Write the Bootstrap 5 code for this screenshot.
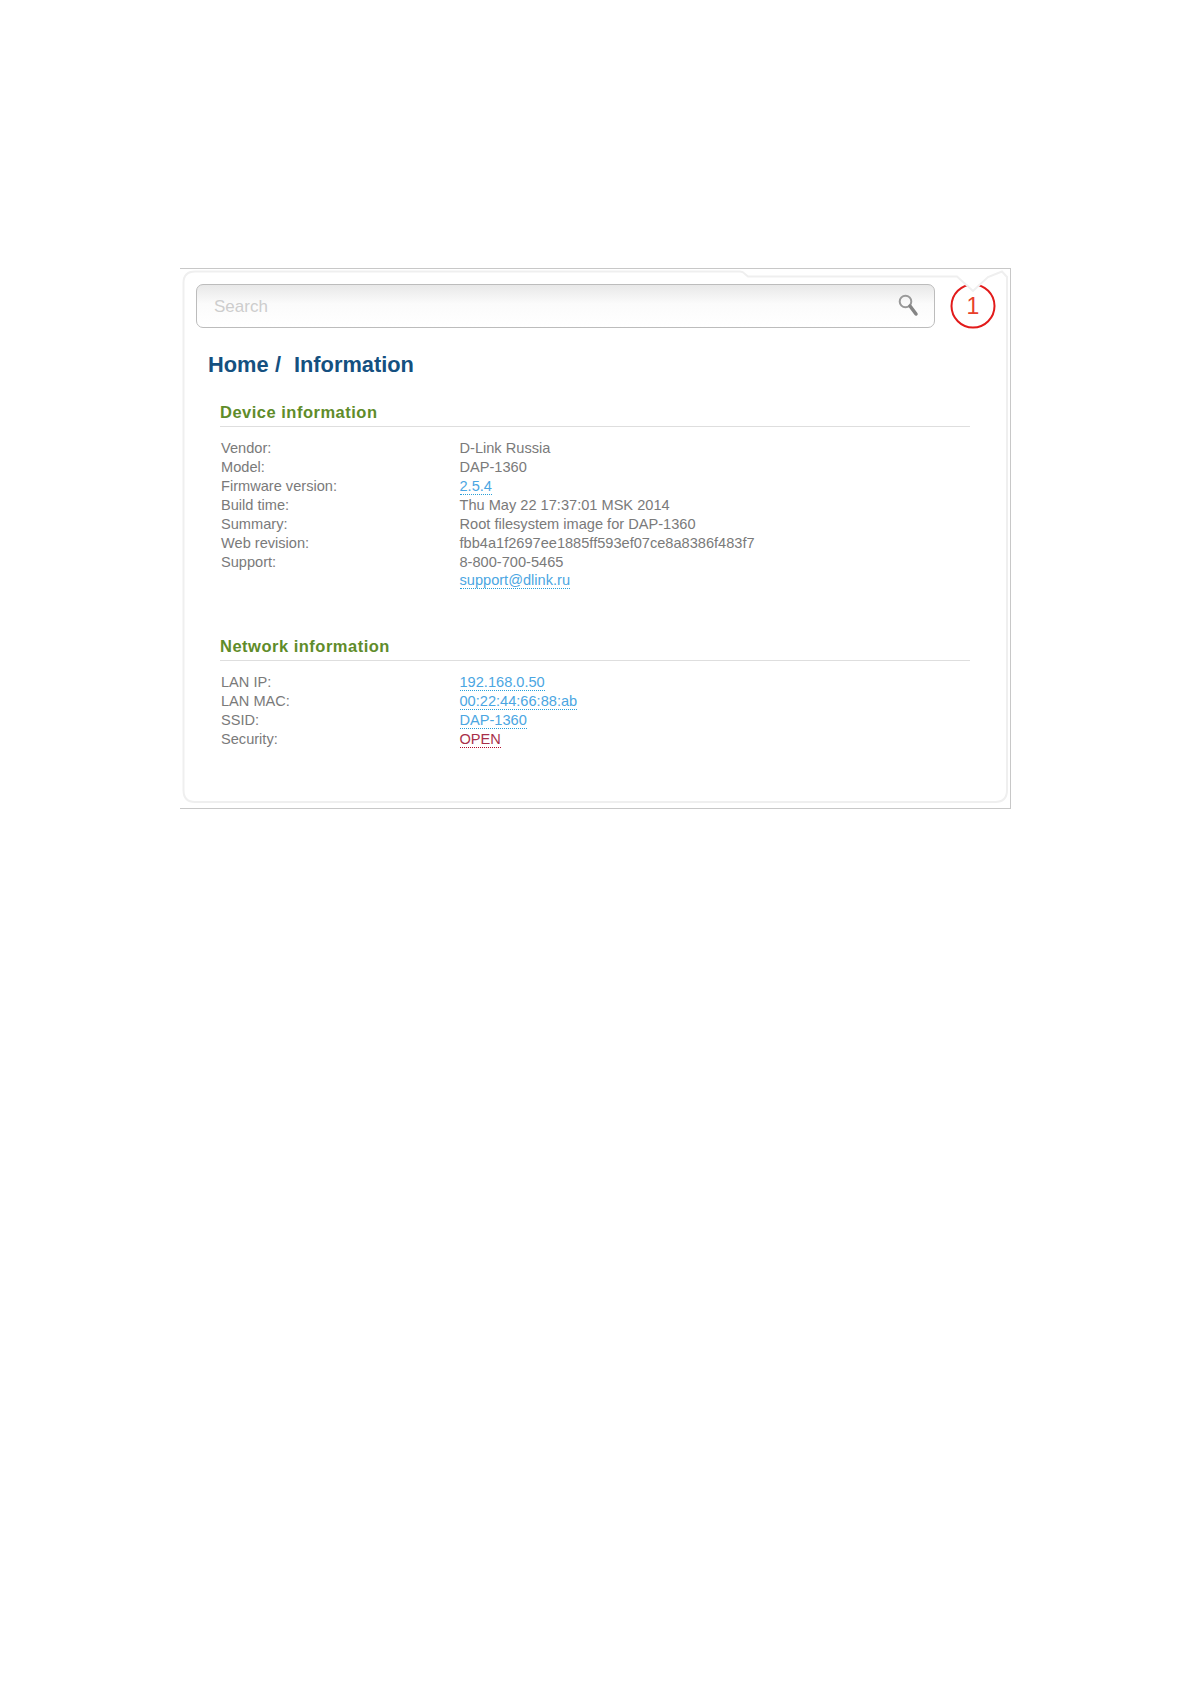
<!DOCTYPE html>
<html lang="en">
<head>
<meta charset="utf-8">
<title>Information</title>
<link href="https://cdn.jsdelivr.net/npm/bootstrap@5.3.0/dist/css/bootstrap.min.css" rel="stylesheet">
<style>
body{background:#fff;font-family:"Liberation Sans",Arial,sans-serif;color:#7a7a7a}
.shot-frame{position:relative;margin:268px 0 0 180px;width:831px;height:541px;border:1px solid #c8c8c8;border-left:0;background:#fff}
.shot-deco{position:absolute;left:0;top:-1px;width:831px;height:541px;pointer-events:none}
.shot-inner{position:relative;padding:15px 0 0 16px}
.shot-search{position:relative;width:739px;height:44px}
.shot-search .form-control{height:44px;border:1px solid #bcbcbc;border-radius:7px;padding:2px 17px 0;font-size:17px;color:#777;background:linear-gradient(#e8e8e8,#fbfbfb 45%,#fff);box-shadow:none}
.shot-search .form-control::placeholder{color:#cdcdcd;opacity:1}
.shot-glass{position:absolute;left:700px;top:8px;width:24px;height:28px}
.shot-mark{position:absolute;left:782px;top:23px;width:22px;text-align:center;font-size:23px;line-height:28px;color:#e8402a}
.shot-title{margin:22px 0 16px 12px;font-size:21.8px;line-height:30px;font-weight:700;color:#145080;white-space:pre;word-spacing:.4px}
.shot-section{width:750px;margin-left:24px}
.shot-section+.shot-section{margin-top:40px}
.shot-head{height:31px;margin:0 0 12px;padding-top:5px;border-bottom:1px solid #dedede;font-size:16.5px;letter-spacing:.5px;line-height:22px;font-weight:700;color:#5f8c2a}
.shot-row{padding-left:1px;font-size:14.6px;line-height:19px;color:#7a7a7a}
.shot-row.shot-tight{margin-top:-1px}
.shot-key{width:238.5px;flex:none}
.shot-link{color:#4ba6e2;text-decoration:none;border-bottom:1px dotted #2a9fd8}
.shot-bad{color:#a8304a;border-bottom-color:#b0102c}
</style>
</head>
<body>
<main class="shot-frame">
  <svg class="shot-deco" viewBox="0 0 831 541" aria-hidden="true">
    <circle cx="793" cy="38" r="21.5" fill="none" stroke="#e21a1a" stroke-width="2"></circle>
    <path d="M775 4 L793 23 L811 4 Z" fill="#fff"></path>
    <path d="M15 3.5 H560 Q563 3.5 565 6 L568 8.5 H777 L793 23 L808 9 L822 3.5 L827 9 V522 Q827 534 815 534 H15 Q3.5 534 3.5 522 V15 Q3.5 3.5 15 3.5 Z" fill="none" stroke="#efefef" stroke-width="2"></path>
  </svg>
  <div class="shot-inner">
    <div class="shot-search">
      <input class="form-control" type="text" placeholder="Search">
      <svg class="shot-glass" viewBox="0 0 24 28" aria-hidden="true">
        <circle cx="9.500" cy="9.500" r="5.800" fill="none" stroke="#999" stroke-width="2"></circle>
        <path d="M14 14 L20 22" stroke="#858585" stroke-width="3.500" stroke-linecap="round"></path>
      </svg>
    </div>
    <div class="shot-mark">1</div>
    <h1 class="shot-title">Home /  Information</h1>
    <section class="shot-section">
      <h2 class="shot-head">Device information</h2>
      <div class="shot-row d-flex"><div class="shot-key">Vendor:</div><div>D-Link Russia</div></div>
      <div class="shot-row d-flex"><div class="shot-key">Model:</div><div>DAP-1360</div></div>
      <div class="shot-row d-flex"><div class="shot-key">Firmware version:</div><div><a class="shot-link" href="#">2.5.4</a></div></div>
      <div class="shot-row d-flex"><div class="shot-key">Build time:</div><div>Thu May 22 17:37:01 MSK 2014</div></div>
      <div class="shot-row d-flex"><div class="shot-key">Summary:</div><div>Root filesystem image for DAP-1360</div></div>
      <div class="shot-row d-flex"><div class="shot-key">Web revision:</div><div>fbb4a1f2697ee1885ff593ef07ce8a8386f483f7</div></div>
      <div class="shot-row d-flex"><div class="shot-key">Support:</div><div>8-800-700-5465</div></div>
      <div class="shot-row shot-tight d-flex"><div class="shot-key"></div><div><a class="shot-link" href="#">support@dlink.ru</a></div></div>
    </section>
    <section class="shot-section">
      <h2 class="shot-head">Network information</h2>
      <div class="shot-row d-flex"><div class="shot-key">LAN IP:</div><div><a class="shot-link" href="#">192.168.0.50</a></div></div>
      <div class="shot-row d-flex"><div class="shot-key">LAN MAC:</div><div><a class="shot-link" href="#">00:22:44:66:88:ab</a></div></div>
      <div class="shot-row d-flex"><div class="shot-key">SSID:</div><div><a class="shot-link" href="#">DAP-1360</a></div></div>
      <div class="shot-row d-flex"><div class="shot-key">Security:</div><div><a class="shot-link shot-bad" href="#">OPEN</a></div></div>
    </section>
  </div>
</main>
<script src="https://cdn.jsdelivr.net/npm/bootstrap@5.3.0/dist/js/bootstrap.bundle.min.js"></script>
</body>
</html>
